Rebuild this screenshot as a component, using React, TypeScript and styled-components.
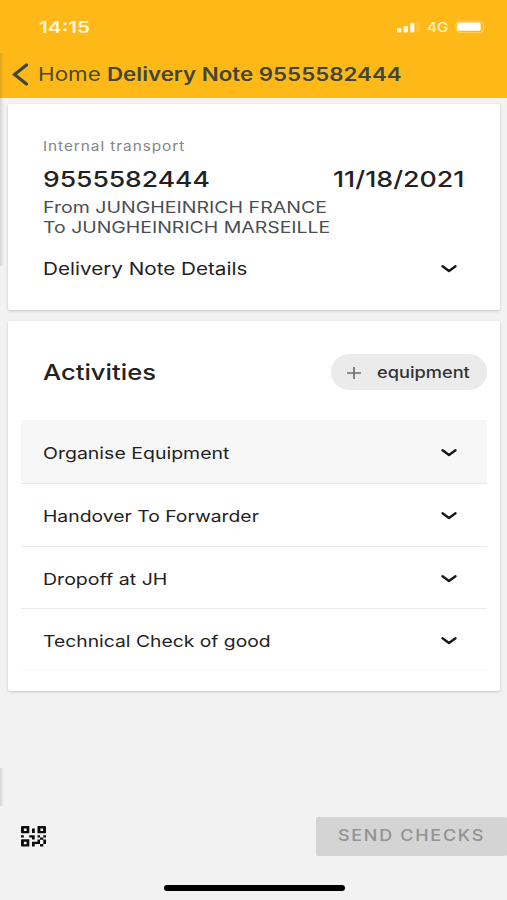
import React from 'react';
import styled, { createGlobalStyle } from 'styled-components';

const Global = createGlobalStyle`
  * { box-sizing: border-box; }
  body { margin: 0; background: #f2f2f2; font-family: Inter, "Liberation Sans", sans-serif; }
`;

const Screen = styled.div`
  position: relative;
  width: 507px;
  height: 900px;
  overflow: hidden;
  display: flex;
  flex-direction: column;
  background: #f2f2f2;
`;

const Header = styled.header`
  height: 98px;
  flex: none;
  background: #feb918;
`;

const StatusBar = styled.div`
  height: 53px;
  display: flex;
  align-items: center;
  justify-content: space-between;
  padding: 0 20px 0 38.5px;
`;

const StatusIcons = styled.div`
  display: flex;
  align-items: center;
  height: 20px;
`;

const NavBar = styled.div`
  height: 42px;
  display: flex;
  align-items: center;
  padding-left: 12px;
`;

const BackIcon = styled.svg`
  display: block;
  flex: none;
  margin-right: 8.5px;
`;

/* Wide text: glyphs are widened from the left edge, inside a box of the final width. */
const Wide = styled.span<{
  $w: number; $size: number; $scale: number; $weight?: number;
  $color?: string; $spacing?: number; $line?: number;
}>`
  display: block;
  flex: none;
  width: ${p => p.$w}px;
  height: ${p => p.$line ?? 24}px;
  line-height: ${p => p.$line ?? 24}px;
  font-size: ${p => p.$size}px;
  font-weight: ${p => p.$weight ?? 400};
  letter-spacing: ${p => p.$spacing ?? 0}px;
  color: ${p => p.$color ?? '#222'};
  text-align: left;
  white-space: nowrap;
  transform: scaleX(${p => p.$scale});
  transform-origin: 0 50%;
`;

const Card = styled.section<{ $h: number; $top: number }>`
  flex: none;
  margin: ${p => p.$top}px 7px 0 8px;
  height: ${p => p.$h}px;
  background: #fff;
  border-radius: 2px;
  box-shadow: 0 1px 3px rgba(0, 0, 0, 0.18);
`;

const NoteCard = styled(Card)`
  padding: 32px 35px 0;
`;

const NoteHead = styled.div`
  display: flex;
  justify-content: space-between;
  margin: 11px 0 6px;
`;

const DetailsRow = styled.div`
  display: flex;
  align-items: center;
  justify-content: space-between;
  margin-top: 20px;
  padding-right: 8px;
`;

const ActivityHead = styled.div`
  display: flex;
  align-items: center;
  justify-content: space-between;
  height: 99px;
  padding: 3px 13px 0 35px;
`;

const AddButton = styled.button`
  display: flex;
  align-items: center;
  width: 156px;
  height: 36px;
  padding: 1px 0 0 16px;
  border: 0;
  border-radius: 18px;
  background: #ebebeb;
  font-family: inherit;
`;

const PlusIcon = styled.svg`
  display: block;
  flex: none;
  margin-right: 16px;
`;

const Row = styled.div<{ $active?: boolean; $last?: boolean }>`
  display: flex;
  align-items: center;
  justify-content: space-between;
  height: ${p => (p.$active ? 64 : p.$last ? 62 : 62.7)}px;
  margin: 0 13px;
  padding: 2px 30px 0 22px;
  background: ${p => (p.$active ? '#f7f7f7' : '#fff')};
  border-bottom: 1px solid ${p => (p.$last ? '#f7f7f7' : '#e9e9e9')};
`;

const Footer = styled.footer`
  flex: none;
  margin-top: 126px;
  height: 38px;
  display: flex;
  align-items: center;
  justify-content: space-between;
  padding-left: 21px;
`;

const SendButton = styled.button`
  display: flex;
  align-items: center;
  width: 191px;
  height: 39px;
  padding: 0 0 0 22px;
  border: 0;
  border-radius: 2px;
  background: #d4d4d4;
  font-family: inherit;
`;

const HomeBar = styled.div`
  flex: none;
  width: 181px;
  height: 6px;
  margin: 30px 0 0 164px;
  border-radius: 3px;
  background: #000;
`;

/* Sliver of the underlying page's edge, lying over the screen. */
const EdgeShade = styled.div<{ $top: number; $h: number }>`
  position: absolute;
  left: 0;
  top: ${p => p.$top}px;
  width: 4px;
  height: ${p => p.$h}px;
  background: linear-gradient(to right, rgba(60, 60, 60, 0.16), rgba(60, 60, 60, 0));
`;

const Chevron = () => (
  <svg width="16" height="10" viewBox="0 0 16 10" fill="none">
    <path d="M1.5 2.2 L8 7 L14.5 2.2" stroke="#151515" strokeWidth="2.3" strokeLinecap="round" strokeLinejoin="round" />
  </svg>
);

const SignalIcon = styled.svg`
  display: block;
  margin: 1px 7px 0 0;
`;

const Signal = () => (
  <SignalIcon width="23" height="12" viewBox="0 0 23 12" fill="#fff6dc">
    <rect x="0" y="7" width="4.4" height="4.4" rx="1" />
    <rect x="6.5" y="5" width="4.4" height="6.4" rx="1" />
    <rect x="13" y="2" width="4.4" height="9.4" rx="1" />
    <rect x="19" y="0" width="4" height="11.4" rx="1" opacity=".12" />
  </SignalIcon>
);

const Battery = () => (
  <svg width="32" height="14" viewBox="0 0 32 14">
    <rect x="1" y="1" width="27.5" height="11.5" rx="3.5" fill="none" stroke="#fff" strokeOpacity=".3" />
    <rect x="2.3" y="2.6" width="23.4" height="8.2" rx="1.5" fill="#fff" />
    <path d="M30 5 Q32 6.8 30 8.6 Z" fill="#fff" opacity=".35" />
  </svg>
);

const QrIcon = () => (
  <svg width="26" height="21" viewBox="0 0 26 21" fill="#0c0c0c">
    <path fillRule="evenodd" d="M1 0H8.3V7.3H1Q0 7.3 0 6.3V1Q0 0 1 0ZM2.9 2.4V4.9H5.6V2.4Z" />
    <path fillRule="evenodd" d="M16.5 0H24Q25 0 25 1V6.3Q25 7.3 24 7.3H16.5ZM19.4 2.4V4.9H22.1V2.4Z" />
    <path fillRule="evenodd" d="M1 13.3H8.3V20.5H1Q0 20.5 0 19.5V14.3Q0 13.3 1 13.3ZM2.9 15.7V18.2H5.6V15.7Z" />
    <path d="M11 2.5H13.8V7H11ZM0 9.3H2.8V11.5H0ZM8.3 9.3H13.7V13.5H11V11.5H8.3ZM16.5 9.3H19V11.5H16.5ZM22.3 9.3H25V11.5H22.3ZM19 11.5H22.3V13.8H19ZM16.5 13.5H19V18H13.7V20.5H11V15.7H16.5ZM22.3 13.5H25V18H22.3ZM19 18H22.3V20.5H19Z" />
  </svg>
);

const activities = [
  { label: 'Organise Equipment', w: 187, scale: 1.182 },
  { label: 'Handover To Forwarder', w: 217, scale: 1.172 },
  { label: 'Dropoff at JH', w: 125, scale: 1.185 },
  { label: 'Technical Check of good', w: 228, scale: 1.17 },
];

export default function App() {
  return (
    <>
      <Global />
      <Screen>
        <Header>
          <StatusBar>
            <Wide $w={52} $size={16.5} $scale={1.26} $weight={600} $color="#fff6d8">14:15</Wide>
            <StatusIcons>
              <Signal />
              <Wide $w={28} $size={13} $scale={1.18} $weight={500} $color="#fff0c4">4G</Wide>
              <Battery />
            </StatusIcons>
          </StatusBar>
          <NavBar>
            <BackIcon width="17" height="23" viewBox="0 0 17 23" fill="none">
              <path d="M14.5 2 L2.5 11.5 L14.5 21" stroke="#41463a" strokeWidth="3.2" strokeLinecap="round" />
            </BackIcon>
            <Wide $w={69} $size={18.5} $scale={1.21} $color="#4b4a2c">Home</Wide>
            <Wide $w={295} $size={18.5} $scale={1.206} $weight={600} $color="#41463a">Delivery Note 9555582444</Wide>
          </NavBar>
        </Header>
        <NoteCard $top={6} $h={206}>
          <Wide $w={142} $size={13.1} $scale={1.175} $spacing={0.8} $color="#858585" $line={20}>Internal transport</Wide>
          <NoteHead>
            <Wide $w={168} $size={22} $scale={1.203} $weight={500}>9555582444</Wide>
            <Wide $w={132} $size={22} $scale={1.218} $weight={500}>11/18/2021</Wide>
          </NoteHead>
          <Wide $w={290} $size={16} $scale={1.221} $line={20} $color="#4a4f52">From JUNGHEINRICH FRANCE</Wide>
          <Wide $w={290} $size={16} $scale={1.215} $line={20} $color="#4a4f52">To JUNGHEINRICH MARSEILLE</Wide>
          <DetailsRow>
            <Wide $w={206} $size={17.3} $scale={1.195}>Delivery Note Details</Wide>
            <Chevron />
          </DetailsRow>
        </NoteCard>
        <Card $top={11} $h={370}>
          <ActivityHead>
            <Wide $w={114} $size={21.5} $scale={1.19} $weight={500} $line={26}>Activities</Wide>
            <AddButton>
              <PlusIcon width="14" height="12" viewBox="0 0 14 12">
                <path d="M0 6H14M7 0V12" stroke="#707070" strokeWidth="1.7" />
              </PlusIcon>
              <Wide $w={93} $size={15.5} $scale={1.175} $weight={500} $color="#333">equipment</Wide>
            </AddButton>
          </ActivityHead>
          {activities.map((a, i) => (
            <Row key={a.label} $active={i === 0} $last={i === activities.length - 1}>
              <Wide $w={a.w} $size={16.5} $scale={a.scale}>{a.label}</Wide>
              <Chevron />
            </Row>
          ))}
        </Card>
        <Footer>
          <QrIcon />
          <SendButton>
            <Wide $w={148} $size={15.5} $scale={1.157} $spacing={1.5} $weight={500} $color="#929292">SEND CHECKS</Wide>
          </SendButton>
        </Footer>
        <HomeBar />
        <EdgeShade $top={53} $h={213} />
        <EdgeShade $top={768} $h={38} />
      </Screen>
    </>
  );
}
